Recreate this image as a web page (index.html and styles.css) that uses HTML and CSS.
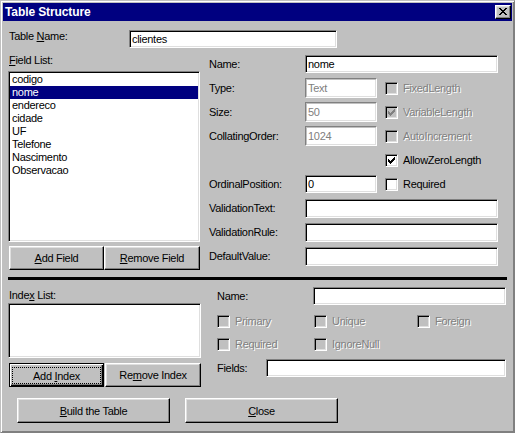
FILE: index.html
```html
<!DOCTYPE html>
<html>
<head>
<meta charset="utf-8">
<title>Table Structure</title>
<link rel="stylesheet" href="styles.css">
</head>
<body>
<div class="window">
  <div class="titlebar">
    <span class="title">Table Structure</span>
    <div class="close-btn">
      <svg width="8" height="7" viewBox="0 0 8 7" shape-rendering="crispEdges"><path fill="#000" d="M0 0h2v1H0zM6 0h2v1H6zM1 1h2v1H1zM5 1h2v1H5zM2 2h4v1H2zM3 3h2v1H3zM2 4h4v1H2zM1 5h2v1H1zM5 5h2v1H5zM0 6h2v1H0zM6 6h2v1H6z"/></svg>
    </div>
  </div>
  <div class="content">
    <div class="row-table">
      <div class="lbl tn-lbl">Table <u>N</u>ame:</div>
      <div class="edit tn-edit">clientes</div>
    </div>

    <div class="section-top">
      <div class="col-left1">
        <div class="lbl list-lbl"><u>F</u>ield List:</div>
        <div class="listbox fields">
          <div class="item">codigo</div>
          <div class="item sel">nome</div>
          <div class="item">endereco</div>
          <div class="item">cidade</div>
          <div class="item">UF</div>
          <div class="item">Telefone</div>
          <div class="item">Nascimento</div>
          <div class="item">Observacao</div>
        </div>
        <div class="btn-row">
          <div class="btn b-add"><span><u>A</u>dd Field</span></div>
          <div class="btn b-rem"><span><u>R</u>emove Field</span></div>
        </div>
      </div>

      <div class="props">
        <div class="lbl">Name:</div>
        <div class="edit w2">nome</div>

        <div class="lbl">Type:</div>
        <div class="edit dis w1">Text</div>
        <div class="chk dis"><div class="box"></div><span class="txt">FixedLength</span></div>

        <div class="lbl">Size:</div>
        <div class="edit dis w1">50</div>
        <div class="chk dis"><div class="box"><svg width="11" height="11" viewBox="1 1 11 11" shape-rendering="crispEdges"><path d="M3 5h1v3H3zM4 6h1v3H4zM5 7h1v3H5zM6 6h1v3H6zM7 5h1v3H7zM8 4h1v3H8zM9 3h1v3H9z"/></svg></div><span class="txt">VariableLength</span></div>

        <div class="lbl">CollatingOrder:</div>
        <div class="edit dis w1">1024</div>
        <div class="chk dis"><div class="box"></div><span class="txt">AutoIncrement</span></div>

        <div class="chk c3"><div class="box"><svg width="11" height="11" viewBox="1 1 11 11" shape-rendering="crispEdges"><path d="M3 5h1v3H3zM4 6h1v3H4zM5 7h1v3H5zM6 6h1v3H6zM7 5h1v3H7zM8 4h1v3H8zM9 3h1v3H9z"/></svg></div><span class="txt">AllowZeroLength</span></div>

        <div class="lbl">OrdinalPosition:</div>
        <div class="edit w1">0</div>
        <div class="chk"><div class="box"></div><span class="txt">Required</span></div>

        <div class="lbl">ValidationText:</div>
        <div class="edit w2 h19"></div>

        <div class="lbl">ValidationRule:</div>
        <div class="edit w2 h19"></div>

        <div class="lbl">DefaultValue:</div>
        <div class="edit w2 h19"></div>
      </div>
    </div>

    <div class="sep"></div>

    <div class="section-bot">
      <div class="col-left2">
        <div class="lbl idx-lbl">Inde<u>x</u> List:</div>
        <div class="listbox idx"></div>
        <div class="btn-row btn-row2">
          <div class="btn default b-addidx"><div class="focus"><span>Add <u>I</u>ndex</span></div></div>
          <div class="btn b-remidx"><span>Re<u>m</u>ove Index</span></div>
        </div>
      </div>
      <div class="idx-props">
        <div class="ip-name">
          <div class="lbl">Name:</div>
          <div class="edit ip-edit">&nbsp;</div>
        </div>
        <div class="chk-row">
          <div class="chk dis"><div class="box"></div><span class="txt">Primary</span></div>
          <div class="chk dis"><div class="box"></div><span class="txt">Unique</span></div>
          <div class="chk dis"><div class="box"></div><span class="txt">Foreign</span></div>
        </div>
        <div class="chk-row">
          <div class="chk dis"><div class="box"></div><span class="txt">Required</span></div>
          <div class="chk dis"><div class="box"></div><span class="txt">IgnoreNull</span></div>
        </div>
        <div class="ip-fields">
          <div class="lbl">Fields:</div>
          <div class="edit fields-edit">&nbsp;</div>
        </div>
      </div>
    </div>

    <div class="footer">
      <div class="btn big"><span><u>B</u>uild the Table</span></div>
      <div class="btn big"><span><u>C</u>lose</span></div>
    </div>
  </div>
</div>
</body>
</html>
```

FILE: styles.css
```css
html, body {
  margin: 0;
  padding: 0;
}

body {
  background: #c0c0c0;
  font-family: "Liberation Sans", Arial, sans-serif;
  font-size: 11px;
  letter-spacing: -0.3px;
  color: #000;
}

u {
  text-decoration: underline;
  text-underline-offset: 1px;
}

.window {
  box-sizing: border-box;
  width: 515px;
  height: 433px;
  background: #c0c0c0;
  border: 1px solid;
  border-color: #c0c0c0 #808080 #808080 #c0c0c0;
  box-shadow: inset 1px 1px #fff, inset -1px -1px #808080;
  padding: 2px;
  display: flex;
  flex-direction: column;
}

.titlebar {
  height: 18px;
  flex-shrink: 0;
  background: #000080;
  color: #fff;
  display: flex;
  align-items: center;
  justify-content: space-between;
  padding: 0 1px 0 2px;
}

.title {
  font-weight: bold;
  font-size: 12px;
  letter-spacing: -0.1px;
}

.close-btn {
  box-sizing: border-box;
  width: 16px;
  height: 14px;
  background: #c0c0c0;
  border: 1px solid;
  border-color: #fff #000 #000 #fff;
  box-shadow: inset -1px -1px #808080, inset 1px 1px #dfdfdf;
  padding: 2px 0 0 3px;
  display: flex;
  align-items: flex-start;
}

.close-btn svg {
  display: block;
}

.content {
  flex: 1;
  display: flex;
  flex-direction: column;
  padding: 0 5px;
}

.lbl {
  line-height: 13px;
  white-space: nowrap;
}

/* sunken edit box */
.edit {
  box-sizing: border-box;
  height: 18px;
  background: #fff;
  border: 1px solid;
  border-color: #808080 #fff #fff #808080;
  box-shadow: inset 1px 1px #000, inset -1px -1px #dfdfdf;
  padding: 0 2px;
  line-height: 16px;
  white-space: nowrap;
  overflow: hidden;
}

.edit.dis {
  color: #808080;
  height: 20px;
  line-height: 18px;
  box-shadow: inset 1px 1px #c0c0c0, inset -1px -1px #dfdfdf;
}

.edit.h19 {
  height: 19px;
  line-height: 17px;
}

.w1 { width: 72px; }
.w2 { width: 193px; grid-column: span 2; }

/* Table name row */
.row-table {
  display: flex;
  align-items: flex-start;
  margin-top: 9px;
  height: 18px;
}

.tn-lbl {
  width: 120px;
  padding-left: 1px;
}

.tn-edit {
  width: 208px;
}

/* top section */
.section-top {
  display: flex;
  margin-top: 4px;
}

.col-left1 {
  width: 192px;
  display: flex;
  flex-direction: column;
}

.list-lbl {
  margin-top: 2px;
  margin-bottom: 4px;
  padding-left: 1px;
}

.listbox {
  box-sizing: border-box;
  background: #fff;
  border: 1px solid;
  border-color: #808080 #fff #fff #808080;
  box-shadow: inset 1px 1px #000, inset -1px -1px #dfdfdf;
  padding: 1px;
}

.listbox.fields {
  height: 171px;
}

.item {
  height: 13px;
  line-height: 13px;
  padding-left: 2px;
  white-space: nowrap;
}

.item.sel {
  background: #000080;
  color: #fff;
}

.btn-row {
  display: flex;
  margin-top: 4px;
  height: 24px;
}

.btn {
  box-sizing: border-box;
  height: 24px;
  display: flex;
  align-items: center;
  justify-content: center;
  background: #c0c0c0;
  border: 1px solid;
  border-color: #fff #000 #000 #fff;
  box-shadow: inset -1px -1px #808080, inset 1px 1px #dfdfdf;
  white-space: nowrap;
}

.b-add { width: 95px; margin-left: 1px; }
.b-rem { width: 96px; }

.props {
  margin-left: 9px;
  display: grid;
  grid-template-columns: 96px 80px 113px;
  grid-auto-rows: 24px;
  align-items: center;
}

.c3 { grid-column: 3; }

/* checkboxes */
.chk {
  display: flex;
  align-items: center;
  gap: 5px;
  white-space: nowrap;
}

.box {
  box-sizing: border-box;
  width: 13px;
  height: 13px;
  flex-shrink: 0;
  background: #fff;
  border: 1px solid;
  border-color: #808080 #fff #fff #808080;
  box-shadow: inset 1px 1px #000, inset -1px -1px #dfdfdf;
}

.box svg {
  display: block;
  fill: #000;
}

.chk .txt {
  line-height: 13px;
}

.chk.dis .box {
  background: #c0c0c0;
}

.chk.dis .box svg {
  fill: #808080;
}

.chk.dis .txt {
  color: #808080;
  text-shadow: 1px 1px 0 #fff;
}

/* separator */
.sep {
  width: 499px;
  height: 3px;
  background: #000;
  margin-top: 7px;
  flex-shrink: 0;
}

/* bottom section */
.section-bot {
  display: flex;
  margin-top: 7px;
}

.col-left2 {
  width: 193px;
  display: flex;
  flex-direction: column;
}

.idx-lbl {
  margin-top: 2px;
  margin-bottom: 1px;
  padding-left: 1px;
}

.listbox.idx {
  height: 55px;
}

.btn-row2 {
  margin-top: 5px;
}

.b-addidx {
  width: 95px;
  margin-left: 1px;
}

.b-remidx {
  width: 96px;
  margin-left: 1px;
}

.btn.default {
  border: 1px solid #000;
  box-shadow: inset 1px 1px #fff, inset -1px -1px #000, inset -2px -2px #808080;
  padding: 3px 2px 2px 2px;
  align-items: stretch;
}

.focus {
  flex: 1;
  border: 1px dotted #000;
  display: flex;
  align-items: center;
  justify-content: center;
}

.idx-props {
  margin-left: 16px;
  display: flex;
  flex-direction: column;
}

.ip-name {
  display: flex;
  align-items: center;
  height: 18px;
}

.ip-name .lbl { width: 96px; }
.ip-edit { width: 193px; }

.chk-row {
  display: grid;
  grid-template-columns: 97px 103px auto;
  height: 13px;
  margin-top: 10px;
}

.ip-fields {
  display: flex;
  align-items: center;
  margin-top: 8px;
}

.ip-fields .lbl { width: 49px; }
.fields-edit { width: 240px; }

/* footer */
.footer {
  display: flex;
  gap: 15px;
  margin-top: 11px;
  padding-left: 9px;
}

.btn.big {
  width: 153px;
  height: 25px;
}
```
